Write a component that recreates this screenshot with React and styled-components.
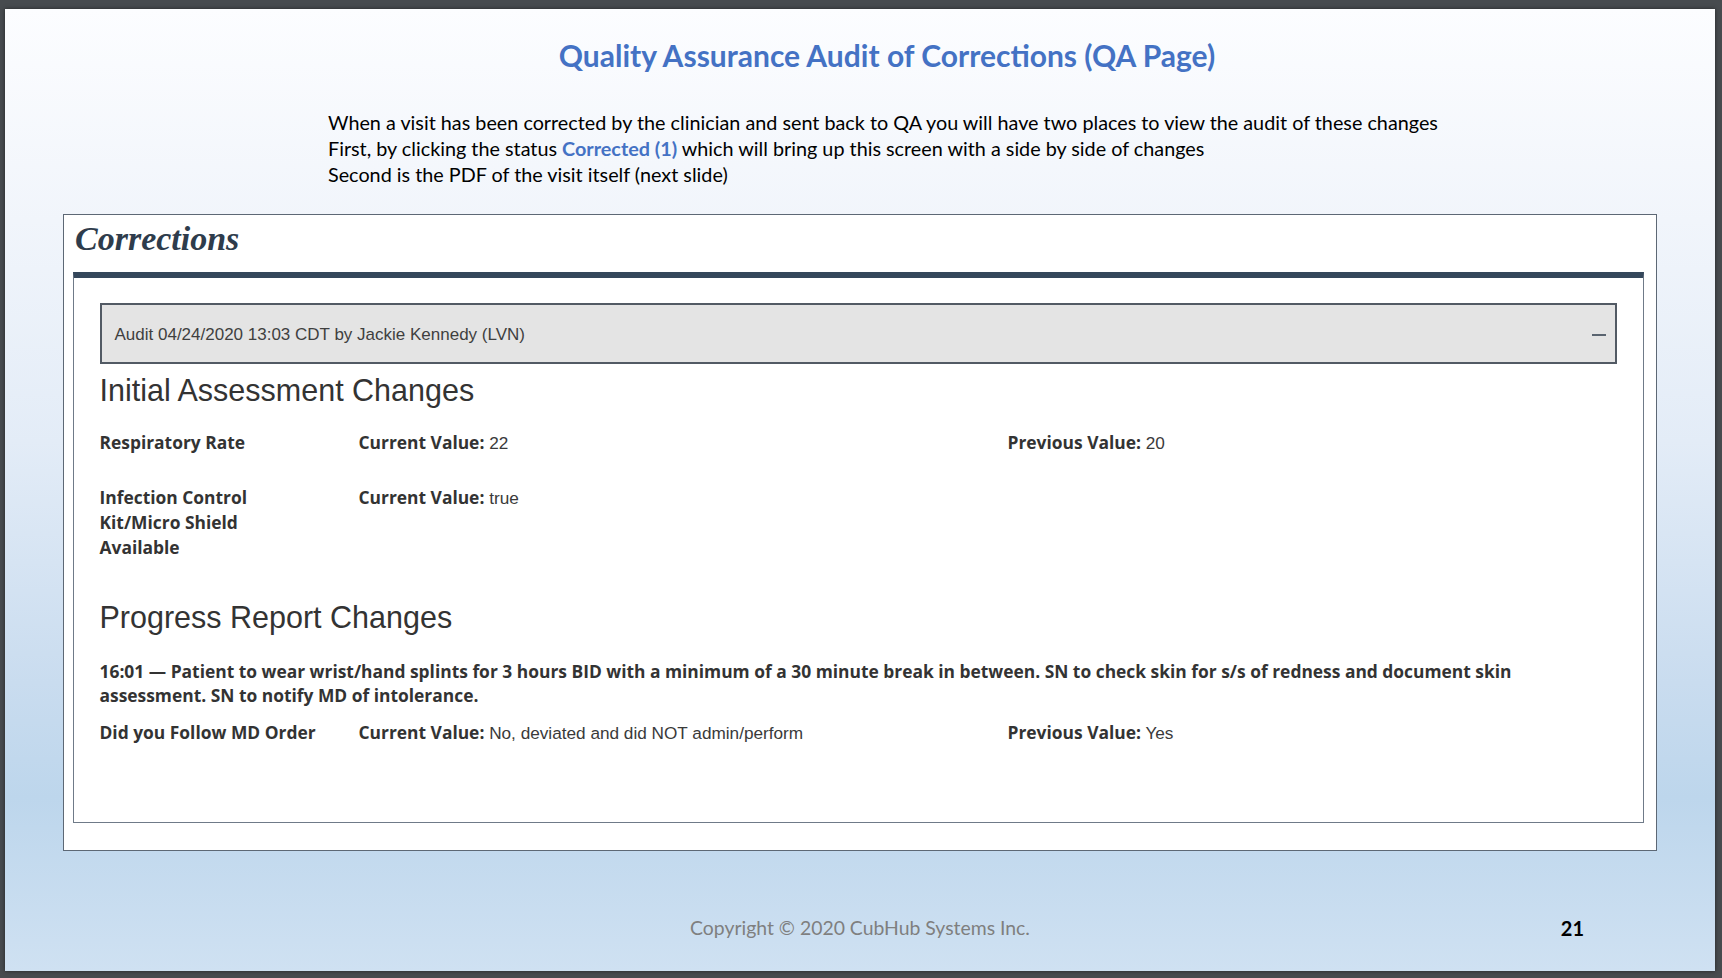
import React from "react";
import styled, { createGlobalStyle } from "styled-components";

const GlobalStyle = createGlobalStyle`
  html, body {
    margin: 0;
    padding: 0;
  }
  body {
    background: #474b4f;
    font-family: "Lato", "Liberation Sans", sans-serif;
  }
`;

const Frame = styled.div`
  box-sizing: border-box;
  width: 1722px;
  height: 978px;
  padding: 9px 7px 7px 5px;
`;

const Slide = styled.div`
  height: 100%;
  display: flex;
  flex-direction: column;
  background: linear-gradient(
    180deg,
    #fcfdff 0%,
    #f1f5fb 22%,
    #e3ecf7 45%,
    #c9dcef 70%,
    #bdd6ec 82%,
    #cfe1f2 100%
  );
  box-shadow: 0 0 4px rgba(0, 0, 0, 0.5);
`;

const Title = styled.h1`
  margin: 30px 0 0;
  padding-left: 54px;
  text-align: center;
  font-family: "Lato", "Liberation Sans", sans-serif;
  font-weight: 700;
  font-size: 30px;
  line-height: 32px;
  color: #4472c4;
`;

const Intro = styled.div`
  margin: 38px 0 0 323px;
  font-size: 19.8px;
  line-height: 26px;
  color: #000;
`;

const Highlight = styled.span`
  color: #4472c4;
  font-weight: 700;
`;

const Panel = styled.div`
  margin: 27px 58px 0;
  height: 637px;
  box-sizing: border-box;
  border: 1.5px solid #5d6875;
  background: #fff;
  padding: 4px 12px 0 9px;
  display: flex;
  flex-direction: column;
`;

const PanelTitle = styled.h2`
  margin: 0 0 13px 2px;
  font-family: "Liberation Serif", "DejaVu Serif", serif;
  font-style: italic;
  font-weight: 700;
  font-size: 34px;
  line-height: 40px;
  color: #2e3c4c;
`;

const Section = styled.div`
  height: 551px;
  box-sizing: border-box;
  border: 1.5px solid #6f7a88;
  border-top: 6px solid #34475b;
  padding: 25px 26px 0 25.5px;
`;

const AuditHeader = styled.div`
  height: 61px;
  box-sizing: border-box;
  display: flex;
  align-items: center;
  justify-content: space-between;
  padding: 3px 9px 0 13px;
  background: #e4e4e4;
  border: 2px solid #525a64;
`;

const AuditText = styled.span`
  font-family: "Liberation Sans", Arial, sans-serif;
  font-size: 17px;
  color: #3f3f3f;
`;

const Collapse = styled.span`
  width: 14px;
  height: 2px;
  background: #5a6470;
`;

const SectionHeading = styled.h3`
  margin: ${(p) => p.$top}px 0 0;
  font-family: "Liberation Sans", Arial, sans-serif;
  font-weight: 400;
  font-size: 30.5px;
  line-height: 31px;
  color: #333;
`;

const FieldRow = styled.div`
  display: grid;
  grid-template-columns: 259px 649px 1fr;
  margin-top: ${(p) => p.$top}px;
  line-height: 25px;
  color: #333;
`;

const Label = styled.div`
  width: 218px;
  font-family: "Open Sans", "Noto Sans", sans-serif;
  font-weight: 700;
  font-size: 17.4px;
`;

const Value = styled.div`
  font-family: "Liberation Sans", Arial, sans-serif;
  font-size: 17.2px;
  color: #3a3a3a;
`;

const Key = styled.span`
  font-family: "Open Sans", "Noto Sans", sans-serif;
  font-weight: 700;
  font-size: 17.4px;
  color: #333;
`;

const Note = styled.p`
  margin: 26px 0 0;
  max-width: 1440px;
  font-family: "Open Sans", "Noto Sans", sans-serif;
  font-weight: 700;
  font-size: 17.4px;
  line-height: 24px;
  color: #333;
`;

const Footer = styled.div`
  margin-top: auto;
  margin-bottom: 30px;
  display: grid;
  grid-template-columns: 1fr auto 1fr;
  align-items: center;
  padding: 0 131px;
  line-height: 26px;
`;

const Copyright = styled.span`
  grid-column: 2;
  font-size: 19.4px;
  color: #7f7f7f;
`;

const PageNumber = styled.span`
  justify-self: end;
  font-size: 20px;
  font-weight: 700;
  color: #000;
`;

const Field = ({ label, current, previous, top }) => (
  <FieldRow $top={top}>
    <Label>{label}</Label>
    <Value>
      <Key>Current Value:</Key> {current}
    </Value>
    <Value>
      {previous !== undefined && (
        <>
          <Key>Previous Value:</Key> {previous}
        </>
      )}
    </Value>
  </FieldRow>
);

const App = () => (
  <>
    <GlobalStyle />
    <Frame>
      <Slide>
        <Title>Quality Assurance Audit of Corrections (QA Page)</Title>
        <Intro>
          When a visit has been corrected by the clinician and sent back to QA
          you will have two places to view the audit of these changes
          <br />
          First, by clicking the status <Highlight>Corrected (1)</Highlight>{" "}
          which will bring up this screen with a side by side of changes
          <br />
          Second is the PDF of the visit itself (next slide)
        </Intro>
        <Panel>
          <PanelTitle>Corrections</PanelTitle>
          <Section>
            <AuditHeader>
              <AuditText>
                Audit 04/24/2020 13:03 CDT by Jackie Kennedy (LVN)
              </AuditText>
              <Collapse />
            </AuditHeader>
            <SectionHeading $top={11}>Initial Assessment Changes</SectionHeading>
            <Field top={24} label="Respiratory Rate" current="22" previous="20" />
            <Field
              top={29}
              label="Infection Control Kit/Micro Shield Available"
              current="true"
            />
            <SectionHeading $top={42}>Progress Report Changes</SectionHeading>
            <Note>
              16:01 — Patient to wear wrist/hand splints for 3 hours BID with a
              minimum of a 30 minute break in between. SN to check skin for s/s
              of redness and document skin assessment. SN to notify MD of
              intolerance.
            </Note>
            <Field
              top={13}
              label="Did you Follow MD Order"
              current="No, deviated and did NOT admin/perform"
              previous="Yes"
            />
          </Section>
        </Panel>
        <Footer>
          <Copyright>Copyright © 2020 CubHub Systems Inc.</Copyright>
          <PageNumber>21</PageNumber>
        </Footer>
      </Slide>
    </Frame>
  </>
);

export default App;
